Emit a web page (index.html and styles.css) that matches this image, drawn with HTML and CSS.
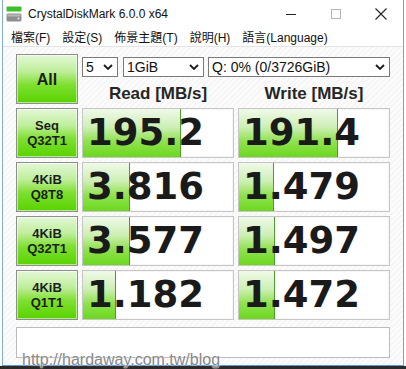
FILE: index.html
```html
<!DOCTYPE html>
<html lang="zh-Hant">
<head>
    <meta charset="UTF-8">
    <title>CrystalDiskMark 6.0.0 x64</title>
    <link rel="stylesheet" href="styles.css">
</head>
<body>

    <div class="window">
        <div class="titlebar">
            <svg class="app-icon" width="16" height="16" viewBox="0 0 16 16">
                <rect x="0.5" y="0.5" width="15" height="5" rx="1" fill="#3cbf2a"/>
                <rect x="0.5" y="7.5" width="15" height="8" rx="1.5" fill="#8f8f8f"/>
                <rect x="1.5" y="8.5" width="13" height="2" fill="#b8b8b8"/>
                <circle cx="12.5" cy="12.5" r="1" fill="#e8e8e8"/>
            </svg>
            <span class="title">CrystalDiskMark 6.0.0 x64</span>
            <div class="caption">
                <span class="cap">
                    <svg width="10" height="10" viewBox="0 0 10 10"><line x1="0" y1="5.5" x2="10" y2="5.5" stroke="#222" stroke-width="1"/></svg>
                </span>
                <span class="cap">
                    <svg width="10" height="10" viewBox="0 0 10 10"><rect x="0.5" y="0.5" width="9" height="9" fill="none" stroke="#b4b4b4" stroke-width="1"/></svg>
                </span>
                <span class="cap">
                    <svg width="12" height="12" viewBox="0 0 12 12"><path d="M0.5 0.5 L11.5 11.5 M11.5 0.5 L0.5 11.5" stroke="#222" stroke-width="1.1"/></svg>
                </span>
            </div>
        </div>

        <div class="menubar">
            <span class="menu">檔案(F)</span>
            <span class="menu">設定(S)</span>
            <span class="menu">佈景主題(T)</span>
            <span class="menu">說明(H)</span>
            <span class="menu">語言(Language)</span>
        </div>

        <div class="client">
            <div class="board">
                <div class="btn btn-all">All</div>
                <div class="setup">
                    <div class="selects">
                        <div class="select sel-count">
                            <span>5</span>
                            <svg width="10" height="6" viewBox="0 0 10 6"><polyline points="1,1 5,5 9,1" fill="none" stroke="#1a1a1a" stroke-width="1.8"/></svg>
                        </div>
                        <div class="select sel-size">
                            <span>1GiB</span>
                            <svg width="10" height="6" viewBox="0 0 10 6"><polyline points="1,1 5,5 9,1" fill="none" stroke="#1a1a1a" stroke-width="1.8"/></svg>
                        </div>
                        <div class="select sel-drive">
                            <span>Q: 0% (0/3726GiB)</span>
                            <svg width="10" height="6" viewBox="0 0 10 6"><polyline points="1,1 5,5 9,1" fill="none" stroke="#1a1a1a" stroke-width="1.8"/></svg>
                        </div>
                    </div>
                    <div class="heads">
                        <div>Read [MB/s]</div>
                        <div>Write [MB/s]</div>
                    </div>
                </div>

                <div class="btn">Seq<br>Q32T1</div>
                <div class="result"><div class="bar" style="width: 64.7%"></div><span>195.2</span></div>
                <div class="result"><div class="bar" style="width: 65.3%"></div><span>191.4</span></div>

                <div class="btn">4KiB<br>Q8T8</div>
                <div class="result"><div class="bar" style="width: 30.7%"></div><span>3.816</span></div>
                <div class="result"><div class="bar" style="width: 22.7%"></div><span>1.479</span></div>

                <div class="btn">4KiB<br>Q32T1</div>
                <div class="result"><div class="bar" style="width: 30.7%"></div><span>3.577</span></div>
                <div class="result"><div class="bar" style="width: 23.3%"></div><span>1.497</span></div>

                <div class="btn">4KiB<br>Q1T1</div>
                <div class="result"><div class="bar" style="width: 21.3%"></div><span>1.182</span></div>
                <div class="result"><div class="bar" style="width: 23.3%"></div><span>1.472</span></div>
            </div>

            <div class="comment"></div>
            <div class="watermark">http://hardaway.com.tw/blog</div>
        </div>
    </div>
    <div class="edge"></div>

</body>
</html>
```

FILE: styles.css
```css
body {
    margin: 0;
    background-color: #fff;
    font-family: 'Liberation Sans', Arial, sans-serif;
    color: #1a1a1a;
    width: 406px;
    height: 369px;
    overflow: hidden;
}

.window {
    box-sizing: border-box;
    margin-left: 2px;
    width: 402px;
    height: 366px;
    border-left: 1px solid #7eaee0;
    border-right: 1px solid #6fa3dc;
    border-bottom: 1px solid #5b96d6;
    display: flex;
    flex-direction: column;
    background-color: #fff;
}

.edge {
    height: 3px;
    background-color: #2a2a2a;
}

/* title bar */
.titlebar {
    height: 27px;
    display: flex;
    align-items: center;
}

.app-icon {
    margin-left: 3px;
    margin-top: 1px;
}

.title {
    margin-left: 6px;
    font-size: 12px;
    color: #111;
}

.caption {
    margin-left: auto;
    display: flex;
}

.cap {
    width: 45px;
    height: 27px;
    display: flex;
    align-items: center;
    justify-content: center;
}

/* menu */
.menubar {
    height: 19px;
    display: flex;
    align-items: center;
    border-bottom: 1px solid #e4e4e4;
    padding-left: 8px;
    font-family: 'Liberation Sans', 'Noto Sans CJK TC', sans-serif;
    font-size: 12px;
    color: #111;
}

.menu {
    margin-right: 12px;
}

/* client area */
.client {
    flex: 1;
    position: relative;
    padding: 7px 0 0 13px;
    background: repeating-linear-gradient(135deg, #f6f6f6 0 2px, #fcfcfc 2px 4px);
}

.board {
    display: grid;
    grid-template-columns: 62px 152px 152px;
    grid-auto-rows: 50px;
    column-gap: 4px;
    row-gap: 4px;
}

.btn {
    box-sizing: border-box;
    border: 1px solid #8e8e8e;
    box-shadow: inset 0 0 0 1px rgba(255, 255, 255, 0.55);
    background: linear-gradient(#e4f7d8 0%, #bdee98 35%, #7edf30 62%, #58d300 100%);
    display: flex;
    align-items: center;
    justify-content: center;
    text-align: center;
    font-weight: bold;
    font-size: 13px;
    line-height: 15px;
    color: #1e1e1e;
}

.btn-all {
    font-size: 16px;
}

.setup {
    grid-column: 2 / 4;
    display: flex;
    flex-direction: column;
}

.selects {
    display: flex;
    margin-top: 3px;
    height: 20px;
}

.select {
    box-sizing: border-box;
    height: 20px;
    border: 1px solid #7a7a7a;
    background-color: #fff;
    display: flex;
    align-items: center;
    justify-content: space-between;
    padding: 0 4px 0 3px;
    font-size: 14px;
    color: #111;
}

.sel-count {
    width: 36px;
}

.sel-size {
    width: 81px;
    margin-left: 5px;
}

.sel-drive {
    flex: 1;
    margin-left: 4px;
}

.heads {
    display: grid;
    grid-template-columns: 152px 152px;
    column-gap: 4px;
    margin-top: 7px;
    text-align: center;
    font-weight: bold;
    font-size: 17px;
    color: #262626;
}

.result {
    box-sizing: border-box;
    position: relative;
    border: 1px solid #c6c6c6;
    box-shadow: inset 0 0 0 1px #f6f6f6;
    background-color: #fff;
    display: flex;
    align-items: center;
    padding-left: 4px;
}

.result .bar {
    position: absolute;
    left: 0;
    top: 0;
    bottom: 0;
    border-right: 1px solid #4c9d2a;
    background: linear-gradient(#f0f9ea 0%, #cdefb4 38%, #92e252 66%, #6cd81e 100%);
}

.result span {
    position: relative;
    font-family: 'DejaVu Sans', sans-serif;
    font-weight: bold;
    font-size: 37px;
    line-height: 40px;
    color: #1a1a1a;
}

.comment {
    box-sizing: border-box;
    margin-top: 7px;
    width: 374px;
    height: 31px;
    border: 1px solid #bcbcbc;
    background-color: #fff;
}

.watermark {
    position: absolute;
    left: 19px;
    top: 304px;
    font-size: 16px;
    line-height: 18px;
    color: #888;
    text-shadow: 0 0 1px #fff, 0 0 2px #fff;
}
```
